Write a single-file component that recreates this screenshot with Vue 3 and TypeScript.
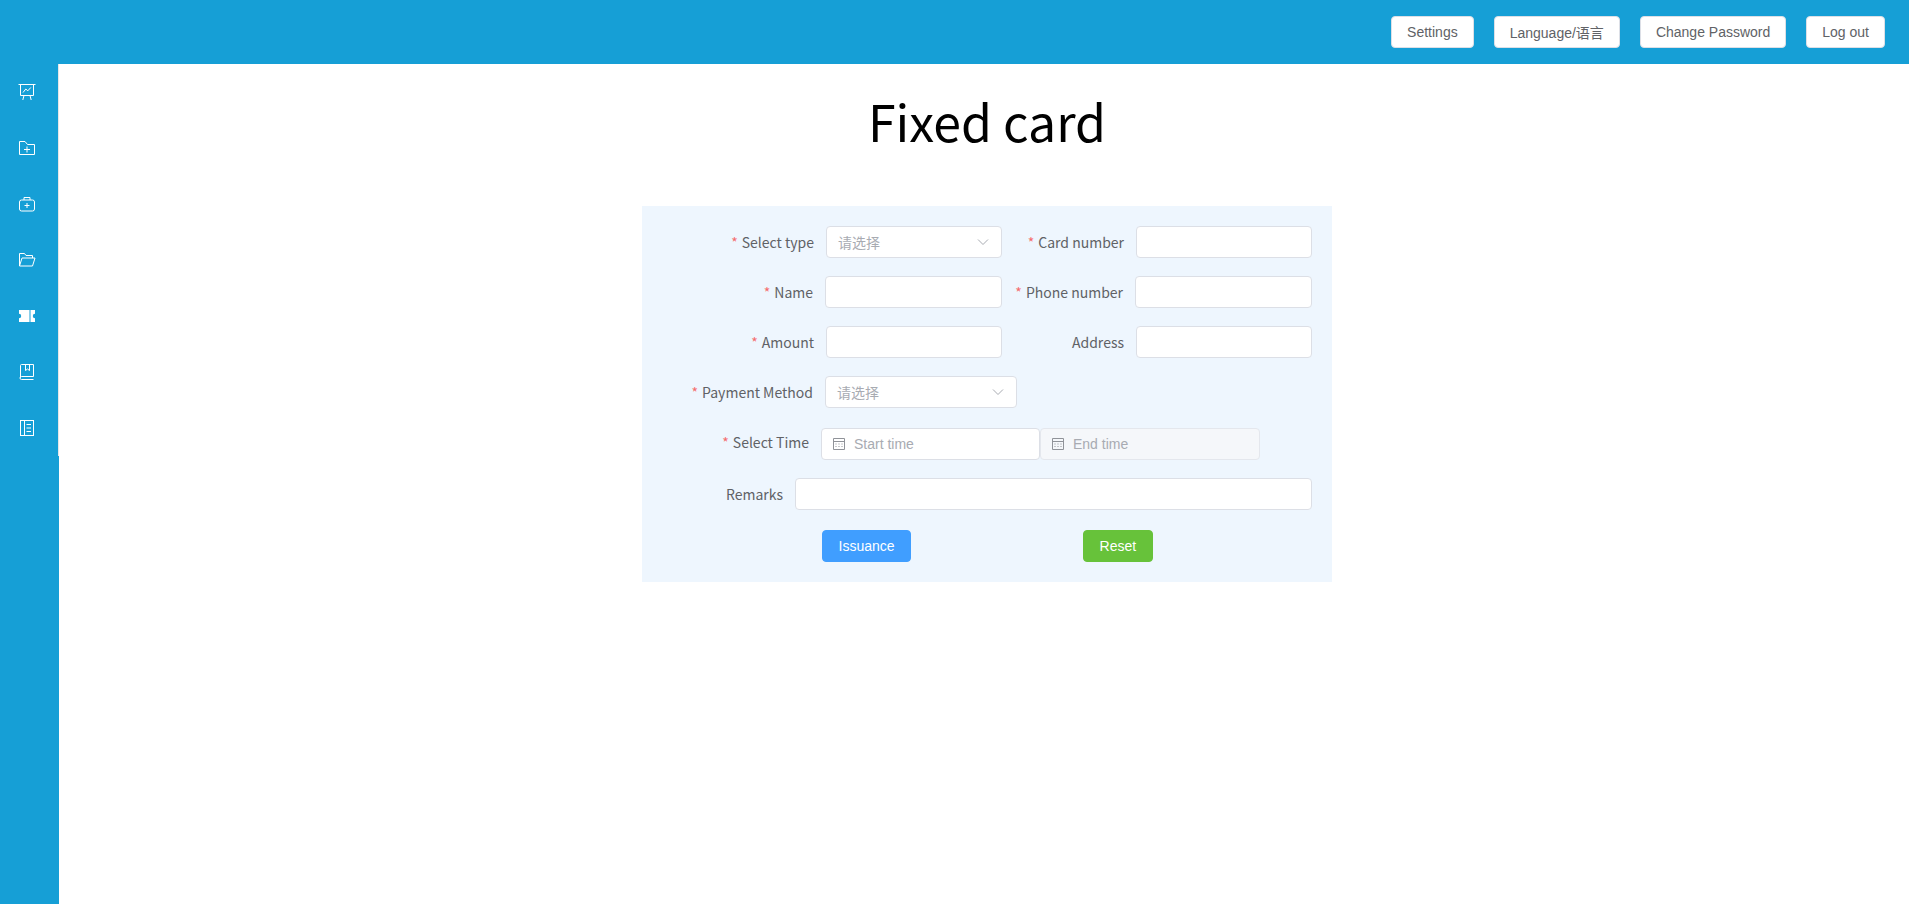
<script setup lang="ts">
const topButtons = ['Settings', 'Language/语言', 'Change Password', 'Log out']
</script>

<template>
  <div class="layout">
    <header class="topbar">
      <button v-for="label in topButtons" :key="label" class="top-btn">{{ label }}</button>
    </header>

    <div class="body">
      <aside class="sidebar">
        <nav class="menu">
          <!-- board -->
          <a class="menu-item">
            <svg viewBox="0 0 18 18" fill="none" stroke="currentColor" stroke-width="1">
              <path d="M0.500 1.500h17M2.500 1.500v11h13v-11M6 12.500l-1.200 4.500M12 12.500l1.200 4.500M5 9.500l2.800-3.500 2 1.800 3-3.300" />
            </svg>
          </a>
          <!-- folder add -->
          <a class="menu-item">
            <svg viewBox="0 0 18 18" fill="none" stroke="currentColor" stroke-width="1">
              <path d="M1.500 2.500h5.500l2.500 3h7v10h-15zM9 7.500v6M6 10.500h6" />
            </svg>
          </a>
          <!-- first aid kit -->
          <a class="menu-item">
            <svg viewBox="0 0 18 18" fill="none" stroke="currentColor" stroke-width="1">
              <rect x="1.500" y="5" width="15" height="11" rx="2" />
              <path d="M6 5V2.500h6V5M9 8v5M6.500 10.500h5" />
            </svg>
          </a>
          <!-- folder opened -->
          <a class="menu-item">
            <svg viewBox="0 0 18 18" fill="none" stroke="currentColor" stroke-width="1">
              <path d="M1.500 15V2.500h5l1.500 2h6.500v2.500M1.500 15l2.500-8h13l-2.500 8z" />
            </svg>
          </a>
          <!-- ticket -->
          <a class="menu-item">
            <svg viewBox="0 0 18 18">
              <path fill="currentColor" d="M1 3h10.500v12H1v-3.800a2.200 2.200 0 0 0 0-4.400zM12.500 3H17v3.800a2.200 2.200 0 0 0 0 4.400V15h-4.500z" />
            </svg>
          </a>
          <!-- collection -->
          <a class="menu-item">
            <svg viewBox="0 0 18 18" fill="none" stroke="currentColor" stroke-width="1">
              <path d="M2.500 14.500V2.500a1 1 0 0 1 1-1h12v12h-12a1 1 0 0 0 0 3h12M7.500 1.500v6l2-1.500 2 1.500v-6" />
            </svg>
          </a>
          <!-- notebook -->
          <a class="menu-item">
            <svg viewBox="0 0 18 18" fill="none" stroke="currentColor" stroke-width="1">
              <rect x="2.500" y="1.500" width="13" height="15" />
              <path d="M6.500 1.500v15M8.500 5.500h4.500M8.500 9h4.500M8.500 12.500h4.500" />
            </svg>
          </a>
        </nav>
      </aside>

      <main class="content">
        <h1 class="title">Fixed card</h1>

        <form class="card" @submit.prevent>
          <div class="row">
            <label class="label w-184"><i>*</i>Select type</label>
            <div class="field select w-176">
              <span>请选择</span>
              <svg class="chevron" viewBox="0 0 14 14"><path d="M2 4.500l5 5 5-5" /></svg>
            </div>
            <label class="label w-134"><i>*</i>Card number</label>
            <input class="field w-176" type="text" />
          </div>

          <div class="row">
            <label class="label w-183"><i>*</i>Name</label>
            <input class="field w-177" type="text" />
            <label class="label w-133"><i>*</i>Phone number</label>
            <input class="field w-177" type="text" />
          </div>

          <div class="row">
            <label class="label w-184"><i>*</i>Amount</label>
            <input class="field w-176" type="text" />
            <label class="label w-134">Address</label>
            <input class="field w-176" type="text" />
          </div>

          <div class="row">
            <label class="label w-183"><i>*</i>Payment Method</label>
            <div class="field select w-192">
              <span>请选择</span>
              <svg class="chevron" viewBox="0 0 14 14"><path d="M2 4.500l5 5 5-5" /></svg>
            </div>
          </div>

          <div class="row row-date">
            <label class="label label-date w-179"><i>*</i>Select Time</label>
            <div class="field date w-219">
              <svg class="cal" viewBox="0 0 14 14"><path d="M1.500 1.500h11v11h-11zM1.500 4.500h11M3.500 7h1M6.500 7h1M9.500 7h1M3.500 9.500h1M6.500 9.500h1M9.500 9.500h1" /></svg>
              <span>Start time</span>
            </div>
            <div class="field date disabled w-220">
              <svg class="cal" viewBox="0 0 14 14"><path d="M1.500 1.500h11v11h-11zM1.500 4.500h11M3.500 7h1M6.500 7h1M9.500 7h1M3.500 9.500h1M6.500 9.500h1M9.500 9.500h1" /></svg>
              <span>End time</span>
            </div>
          </div>

          <div class="row">
            <label class="label w-153">Remarks</label>
            <input class="field w-517" type="text" />
          </div>

          <div class="actions">
            <button class="btn primary" type="submit">Issuance</button>
            <button class="btn success" type="reset">Reset</button>
          </div>
        </form>
      </main>
    </div>
  </div>
</template>

<style>
html,
body {
  margin: 0;
  background: #fff;
}
</style>

<style scoped>
.layout {
  display: flex;
  flex-direction: column;
  height: 100vh;
  overflow: hidden;
  font-family: "Noto Sans CJK SC", "Noto Sans", sans-serif;
}

.topbar {
  flex: none;
  height: 64px;
  background: #169fd6;
  display: flex;
  align-items: center;
  justify-content: flex-end;
  gap: 20px;
  padding-right: 24px;
  box-sizing: border-box;
}

.top-btn {
  height: 32px;
  padding: 0 15px;
  background: #fff;
  border: 1px solid #dcdfe6;
  border-radius: 4px;
  color: #606266;
  font: 14px "Liberation Sans", "Noto Sans CJK SC", sans-serif;
}

.body {
  flex: 1;
  display: flex;
  min-height: 0;
}

.sidebar {
  flex: none;
  width: 59px;
  background: #169fd6;
}

.menu {
  height: 392px;
  box-sizing: border-box;
  border-right: 1px solid #e6e6e6;
  display: flex;
  flex-direction: column;
}

.menu-item {
  height: 56px;
  display: flex;
  align-items: center;
  padding-left: 18px;
  color: #fff;
}

.menu-item svg {
  width: 18px;
  height: 18px;
}

.content {
  flex: 1;
  min-width: 0;
  margin-left: 6px;
  display: flex;
  flex-direction: column;
  align-items: center;
}

.title {
  margin: 20px 0 0;
  height: 122px;
  font-size: 50px;
  font-weight: 400;
  line-height: 72px;
  color: #000;
}

.card {
  width: 690px;
  height: 376px;
  box-sizing: border-box;
  background: #eef6fe;
  padding-top: 20px;
  display: flex;
  flex-direction: column;
  gap: 18px;
}

.row {
  display: flex;
  height: 32px;
}

.row-date {
  margin-top: 2px;
}

.label {
  flex: none;
  box-sizing: border-box;
  padding-right: 12px;
  text-align: right;
  font-size: 14px;
  line-height: 32px;
  color: #606266;
}

.label i {
  font-style: normal;
  color: #f56c6c;
  margin-right: 4px;
}

.label-date {
  padding-right: 12px;
  line-height: 28px;
}

.w-184 { width: 184px; }
.w-183 { width: 183px; }
.w-134 { width: 134px; }
.w-133 { width: 133px; }
.w-176 { width: 176px; }
.w-177 { width: 177px; }
.w-192 { width: 192px; }
.w-179 { width: 179px; }
.w-219 { width: 219px; }
.w-220 { width: 220px; }
.w-153 { width: 153px; }
.w-517 { width: 517px; }

.field {
  flex: none;
  box-sizing: border-box;
  height: 32px;
  background: #fff;
  border: 1px solid #dcdfe6;
  border-radius: 4px;
  outline: none;
  font-size: 14px;
  color: #a8abb2;
}

.select {
  display: flex;
  align-items: center;
  justify-content: space-between;
  padding: 0 11px;
}

.chevron {
  width: 14px;
  height: 14px;
  fill: none;
  stroke: #a8abb2;
  stroke-width: 1;
}

.date {
  display: flex;
  align-items: center;
  gap: 8px;
  padding-left: 10px;
  font-family: "Liberation Sans", sans-serif;
}

.date.disabled {
  background: #f5f7fa;
  border-color: #e4e7ed;
}

.cal {
  width: 14px;
  height: 14px;
  fill: none;
  stroke: #909399;
  stroke-width: 1;
}

.actions {
  display: flex;
  gap: 172px;
  padding-left: 180px;
  margin-top: 2px;
}

.btn {
  height: 32px;
  padding: 0 15.5px;
  border: 1px solid transparent;
  border-radius: 4px;
  color: #fff;
  font: 14px "Liberation Sans", sans-serif;
}

.primary {
  background: #409eff;
  border-color: #409eff;
}

.success {
  background: #67c23a;
  border-color: #67c23a;
}
</style>
